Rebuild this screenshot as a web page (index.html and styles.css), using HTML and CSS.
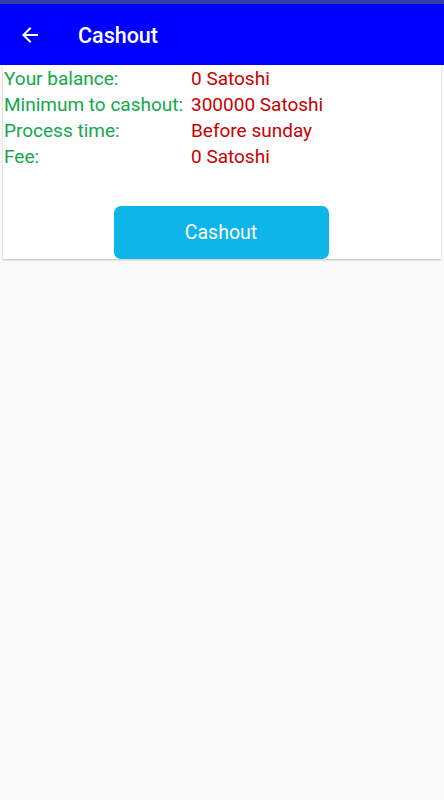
FILE: index.html
```html
<!DOCTYPE html>
<html lang="en">
<head>
  <meta charset="UTF-8" />
  <meta name="viewport" content="width=device-width, initial-scale=1.0"/>
  <title>Cashout</title>
  <link rel="stylesheet" href="styles.css">
</head>
<body>

  <div class="status-bar"></div>

  <header class="toolbar">
    <button class="back-btn" aria-label="Back">
      <svg width="24" height="24" viewBox="0 0 24 24">
        <path d="M20 11H7.83l5.59-5.59L12 4l-8 8 8 8 1.41-1.41L7.83 13H20v-2z" fill="#fff"/>
      </svg>
    </button>
    <h1 class="title">Cashout</h1>
  </header>

  <div class="card">
    <div class="info">
      <span class="label">Your balance:</span>
      <span class="value">0 Satoshi</span>
      <span class="label">Minimum to cashout:</span>
      <span class="value">300000 Satoshi</span>
      <span class="label">Process time:</span>
      <span class="value">Before sunday</span>
      <span class="label">Fee:</span>
      <span class="value">0 Satoshi</span>
    </div>

    <div class="actions">
      <button class="cashout-btn">Cashout</button>
    </div>
  </div>

</body>
</html>
```

FILE: styles.css
```css
* { box-sizing: border-box; }

body {
  margin: 0;
  padding: 0;
  font-family: Roboto, 'Noto Sans', sans-serif;
  background: #fafafa;
  width: 444px;
  height: 800px;
  overflow: hidden;
}

.status-bar {
  height: 4px;
  background: #3340a8;
}

.toolbar {
  height: 61px;
  background: #0000ff;
  display: flex;
  align-items: center;
  padding: 1px 0 0 18px;
}

.back-btn {
  border: none;
  background: none;
  padding: 0;
  width: 24px;
  height: 24px;
  display: flex;
}

.title {
  margin: 0 0 0 36px;
  color: #fff;
  font-size: 21.5px;
  font-weight: 500;
}

.card {
  margin: 0 3px;
  background: #fff;
  box-shadow: 0 1px 2px rgba(0,0,0,0.25);
  height: 194px;
  display: flex;
  flex-direction: column;
}

.info {
  display: grid;
  grid-template-columns: 187px auto;
  padding: 1px 0 0 1px;
  font-size: 19px;
  line-height: 26px;
}

.label { color: #13a84a; }
.value { color: #c80000; }

.actions {
  display: flex;
  justify-content: center;
  margin-top: auto;
  padding-right: 2px;
}

.cashout-btn {
  width: 215px;
  height: 53px;
  border: none;
  border-radius: 7px;
  background: #0db5e8;
  color: #fff;
  font-family: Roboto, 'Noto Sans', sans-serif;
  font-size: 19.5px;
}
```
